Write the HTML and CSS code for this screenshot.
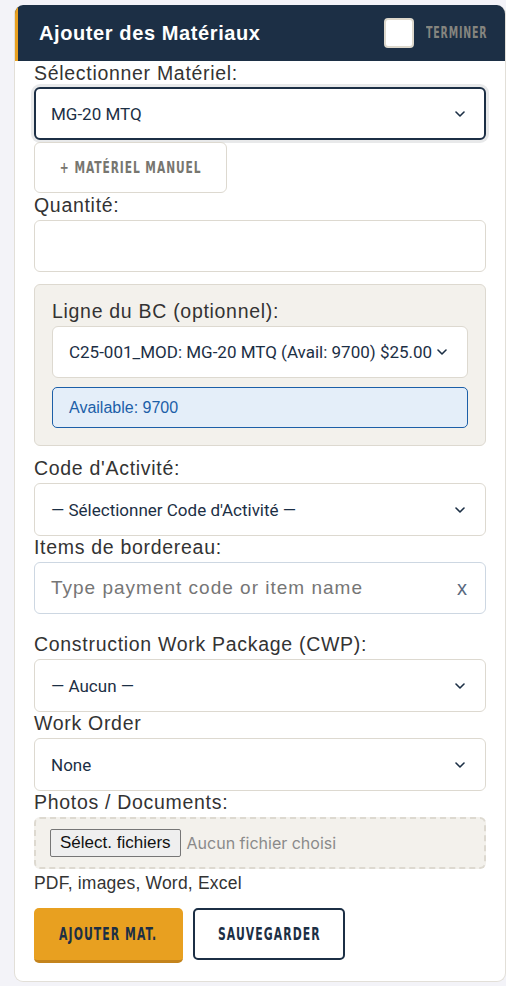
FILE: index.html
```html
<!DOCTYPE html>
<html lang="fr">
<head>
<meta charset="utf-8">
<title>Ajouter des Matériaux</title>
<link rel="stylesheet" href="styles.css">
</head>
<body>
<div class="card">
  <div class="card-header">
    <h2 class="card-title">Ajouter des Matériaux</h2>
    <div class="header-right">
      <span class="check-box"></span>
      <span class="terminer"><span class="cond">TERMINER</span></span>
    </div>
  </div>
  <div class="card-body">
    <label class="lbl lbl-first">Sélectionner Matériel:</label>
    <div class="select select-focus">
      <span class="select-text">MG-20 MTQ</span>
      <svg class="chev" width="10" height="6" viewBox="0 0 10 6"><path d="M1 1l4 4 4-4" fill="none" stroke="#1c2f45" stroke-width="1.6" stroke-linecap="round" stroke-linejoin="round"/></svg>
    </div>
    <button class="btn-manual"><span class="cond">+ MATÉRIEL MANUEL</span></button>

    <label class="lbl">Quantité:</label>
    <div class="input"></div>

    <div class="panel">
      <label class="lbl">Ligne du BC (optionnel):</label>
      <div class="select">
        <span class="select-text">C25-001_MOD: MG-20 MTQ (Avail: 9700) $25.00</span>
        <svg class="chev" width="10" height="6" viewBox="0 0 10 6"><path d="M1 1l4 4 4-4" fill="none" stroke="#1c2f45" stroke-width="1.6" stroke-linecap="round" stroke-linejoin="round"/></svg>
      </div>
      <div class="info">Available: 9700</div>
    </div>

    <label class="lbl lbl-after-panel">Code d'Activité:</label>
    <div class="select">
      <span class="select-text">— Sélectionner Code d'Activité —</span>
      <svg class="chev" width="10" height="6" viewBox="0 0 10 6"><path d="M1 1l4 4 4-4" fill="none" stroke="#1c2f45" stroke-width="1.6" stroke-linecap="round" stroke-linejoin="round"/></svg>
    </div>

    <label class="lbl">Items de bordereau:</label>
    <div class="search">
      <span class="placeholder">Type payment code or item name</span>
      <span class="clear">x</span>
    </div>

    <label class="lbl lbl-spaced">Construction Work Package (CWP):</label>
    <div class="select">
      <span class="select-text">— Aucun —</span>
      <svg class="chev" width="10" height="6" viewBox="0 0 10 6"><path d="M1 1l4 4 4-4" fill="none" stroke="#1c2f45" stroke-width="1.6" stroke-linecap="round" stroke-linejoin="round"/></svg>
    </div>

    <label class="lbl">Work Order</label>
    <div class="select">
      <span class="select-text">None</span>
      <svg class="chev" width="10" height="6" viewBox="0 0 10 6"><path d="M1 1l4 4 4-4" fill="none" stroke="#1c2f45" stroke-width="1.6" stroke-linecap="round" stroke-linejoin="round"/></svg>
    </div>

    <label class="lbl">Photos / Documents:</label>
    <div class="filebox">
      <span class="file-btn">Sélect. fichiers</span>
      <span class="file-none">Aucun fichier choisi</span>
    </div>
    <div class="hint">PDF, images, Word, Excel</div>

    <div class="actions">
      <button class="btn-primary"><span class="cond">AJOUTER MAT.</span></button>
      <button class="btn-outline"><span class="cond">SAUVEGARDER</span></button>
    </div>
  </div>
</div>
</body>
</html>
```
FILE: styles.css
```css
* { box-sizing: border-box; }
html, body { margin: 0; padding: 0; }
body {
  background: #f3f3f8;
  font-family: "Liberation Sans", Arial, sans-serif;
  color: #333;
}
.card {
  margin: 5px 0 0 14px;
  width: 492px;
  height: 977px;
  background: #fff;
  border: 1px solid #e2dfd8;
  border-top: none;
  border-radius: 9px;
  overflow: hidden;
}
.card-header {
  height: 56px;
  background: #1c2f45;
  border-left: 3px solid #e8a020;
  display: flex;
  align-items: center;
  justify-content: space-between;
  padding: 0 19px 0 21px;
}
.card-title {
  margin: 0;
  color: #fff;
  font-size: 20px;
  font-weight: bold;
  letter-spacing: 0.6px;
}
.header-right {
  display: flex;
  align-items: center;
  gap: 12px;
}
.check-box {
  width: 30px;
  height: 30px;
  background: #fff;
  border: 2px solid #ddd8cc;
  border-radius: 4px;
}
.cond {
  display: inline-block;
  white-space: nowrap;
  font-family: "DejaVu Sans Condensed", "DejaVu Sans", sans-serif;
  font-weight: bold;
}
.terminer {
  display: block;
  width: 60px;
  height: 18px;
  line-height: 18px;
}
.terminer .cond {
  font-size: 15px;
  letter-spacing: 1.2px;
  color: #85857f;
  transform: scaleX(0.7);
  transform-origin: left center;
}
.card-body {
  padding: 1px 19px 17px 19px;
  display: flex;
  flex-direction: column;
  align-items: flex-start;
}
.lbl {
  display: block;
  font-size: 19.5px;
  line-height: 22px;
  letter-spacing: 0.7px;
  color: #333;
  margin-bottom: 4px;
}
.lbl-first { margin-bottom: 3px; }
.lbl-after-panel { margin-top: 11px; }
.lbl-spaced { margin-top: 19px; }
.select, .input, .search {
  width: 100%;
  height: 53px;
  border: 1px solid #ddd9d0;
  border-radius: 6px;
  background: #fff;
  display: flex;
  align-items: center;
  justify-content: space-between;
  padding: 0 20px 0 16px;
  flex: none;
}
.input { height: 52px; }
.select-focus {
  height: 53px;
  border: 2px solid #1c2f45;
  padding-left: 15px;
  padding-right: 19px;
  box-shadow: 0 0 0 3px #e8e9ea;
}
.select-text {
  font-family: Roboto, "Liberation Sans", sans-serif;
  font-size: 17px;
  color: #1c2f45;
  white-space: nowrap;
}
.chev { flex: none; }
.btn-manual {
  margin-top: 2px;
  width: 193px;
  height: 51px;
  background: #fff;
  border: 1px solid #ddd9d0;
  border-radius: 6px;
  margin-bottom: 1px;
  padding: 0;
}
.btn-manual .cond {
  font-size: 15px;
  letter-spacing: 1.2px;
  color: #77766f;
  transform: scaleX(0.79);
}
.panel {
  margin-top: 12px;
  width: 100%;
  background: #f3f1ec;
  border: 1px solid #ddd9d0;
  border-radius: 6px;
  padding: 15px 17px 17px 17px;
}
.panel .select { height: 52px; }
.info {
  margin-top: 9px;
  height: 41px;
  background: #e4eef9;
  border: 1px solid #1c5fa8;
  border-radius: 5px;
  display: flex;
  align-items: center;
  padding-left: 16px;
  font-size: 16px;
  color: #1c5fa8;
}
.search {
  border-color: #cdd7e2;
  padding-right: 18px;
  height: 52px;
}
.placeholder {
  font-size: 19px;
  letter-spacing: 1px;
  color: #767676;
}
.clear {
  font-size: 20px;
  color: #5a6a80;
}
.filebox {
  width: 100%;
  height: 52px;
  background: #f3f1ec;
  border: 2px dashed #ddd9d0;
  border-radius: 6px;
  display: flex;
  align-items: center;
  padding-left: 14px;
  gap: 6px;
}
.file-btn {
  height: 28px;
  padding: 0 9px;
  display: flex;
  align-items: center;
  background: #efefef;
  border: 1px solid #767676;
  border-radius: 2px;
  font-size: 17px;
  color: #111;
}
.file-none {
  font-family: Inter, "Liberation Sans", sans-serif;
  font-size: 16px;
  color: #8a8a8a;
}
.hint {
  margin-top: 4px;
  font-size: 17.5px;
  line-height: 20px;
  letter-spacing: 0.2px;
  color: #333;
}
.actions {
  margin-top: 15px;
  display: flex;
  gap: 10px;
}
.btn-primary, .btn-outline {
  border-radius: 5px;
  padding: 0;
}
.btn-primary .cond, .btn-outline .cond {
  font-size: 17px;
  letter-spacing: 1.5px;
  color: #1c2f45;
  transform: scaleX(0.71);
}
.btn-primary {
  width: 149px;
  height: 55px;
  background: #e8a020;
  border: none;
  border-bottom: 3px solid #c4841c;
}
.btn-outline {
  width: 152px;
  height: 52px;
  background: #fff;
  border: 2px solid #1c2f45;
}
```
